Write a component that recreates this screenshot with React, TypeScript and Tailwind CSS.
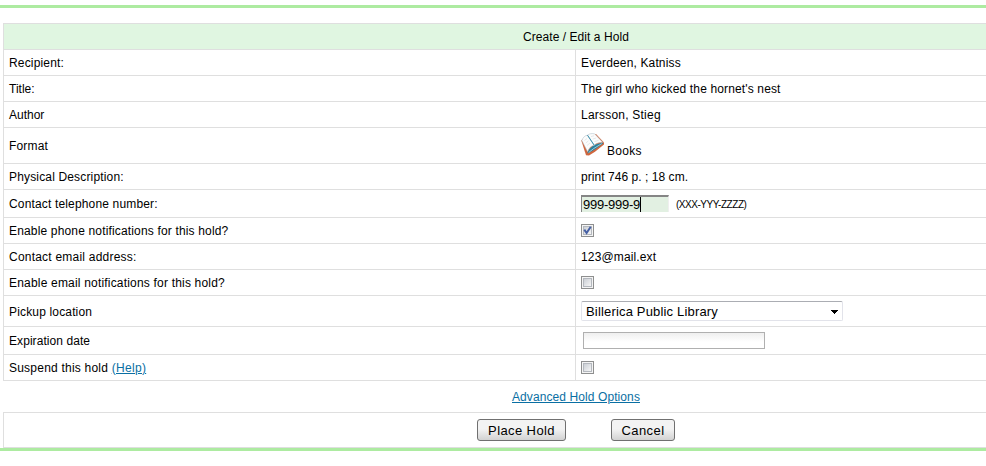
import type { ReactNode } from "react";

function Row({ label, height, children }: { label: ReactNode; height: string; children: ReactNode }) {
  return (
    <div className={`flex border-t border-[#dfdfdf] ${height}`}>
      <div className="flex w-[572px] shrink-0 items-center border-r border-[#dfdfdf] pl-[5px] tracking-[0.16px]">{label}</div>
      <div className="flex grow items-center pl-[5px] tracking-[0.14px]">{children}</div>
    </div>
  );
}

function Check({ checked = false }: { checked?: boolean }) {
  return (
    <span role="checkbox" aria-checked={checked} className="block size-[13px] border border-[#8e8f8f] bg-[#f4f4f4] p-px">
      <span className="block size-[9px] border border-[#b4b8be] bg-linear-to-br from-[#cbcfd5] to-[#f6f6f6]">
        {checked && (
          <svg viewBox="0 0 9 9" className="-ml-px -mt-px size-[9px]" fill="none">
            <path d="M1.3 3.6 L3.6 7 L7.7 0.8" stroke="#4660a4" strokeWidth="2" />
          </svg>
        )}
      </span>
    </span>
  );
}

function BookIcon() {
  return (
    <svg viewBox="0 0 24 24" className="-mt-px h-6 w-6 shrink-0" fill="none">
      <path d="M0.3 7.5 L5 22.3 L8 22.6 L14 18.8 L23 11.6 L23 9.5 L15 1 L6 2.5 Z" fill="#d0673f" />
      <path d="M6.2 20.5 L8 16.5 L13 12 L21.8 9.6 L22 10.6 L14.5 16 L9.5 19 Z" fill="#2583a2" />
      <path d="M7.6 19.6 L12.5 15.7 L20.8 10.6" stroke="#d5e6eb" strokeWidth=".7" />
      <path d="M0.8 7.4 C2 4.5 4 2.4 6.5 2.2 L13.2 12.2 C10 12.8 8 15 6.6 18.8 Z" fill="#fbfcfc" stroke="#a9bac4" strokeWidth=".5" />
      <path d="M6.5 2.2 C8.5 .5 11 .2 13.8 .9 L21.8 9.4 C18.5 9.2 15.5 10.2 13.2 12.2 Z" fill="#fbfcfc" stroke="#a9bac4" strokeWidth=".5" />
      <path d="M6.5 2.2 L13.2 12.2" stroke="#3b94b3" strokeWidth="1" />
      <path d="M3.5 7.5 L6 5.5 M4.8 10 L7.5 7.8 M6 12.5 L9 10 M10 3.5 L13 2.8 M11.8 6 L15.2 5 M13.5 8.6 L17.5 7.4" stroke="#d3dade" strokeWidth=".6" />
    </svg>
  );
}

export default function App() {
  return (
    <div className="h-[466px] overflow-hidden bg-white pt-[5px] font-['Liberation_Sans',Arial,sans-serif] text-[12px] leading-[14px] whitespace-nowrap text-black">
      <div className="h-[3px] bg-[#adeba1]" />
      <div className="mt-[15px] ml-[3px] border-l border-[#dfdfdf]">
        <div className="flex h-[26px] items-center border-t border-[#dfdfdf] bg-[#e0f6e1] pl-[519px]">
          <span className="tracking-[0.06px]">Create / Edit a Hold</span>
        </div>
        <Row height="h-[26px]" label={<span>Recipient:</span>}><span>Everdeen, Katniss</span></Row>
        <Row height="h-[26px]" label={<span className="tracking-normal">Title:</span>}><span>The girl who kicked the hornet's nest</span></Row>
        <Row height="h-[26px]" label={<span className="tracking-normal">Author</span>}><span className="tracking-[0.22px]">Larsson, Stieg</span></Row>
        <Row height="h-[36px]" label={<span>Format</span>}>
          <BookIcon />
          <span className="mt-[10px] ml-[2px] tracking-[0.3px]">Books</span>
        </Row>
        <Row height="h-[26px]" label={<span>Physical Description:</span>}><span className="tracking-[0.05px]">print 746 p. ; 18 cm.</span></Row>
        <Row height="h-[28px]" label={<span>Contact telephone number:</span>}>
          <span className="-mt-px flex h-[17px] w-[88px] items-center border-t-2 border-l border-r border-t-[#858585] border-r-[#efefef] border-l-[#858585] bg-[#e2f0e2] pl-px text-[13px] tracking-[-0.25px]">
            <span className="mt-[2px]">999-999-9</span>
            <span className="h-[15px] w-px bg-black" />
          </span>
          <span className="mt-[3px] ml-[7px] text-[10px] tracking-[-0.46px]">(XXX-YYY-ZZZZ)</span>
        </Row>
        <Row height="h-[26px]" label={<span>Enable phone notifications for this hold?</span>}><Check checked /></Row>
        <Row height="h-[26px]" label={<span className="tracking-[0.22px]">Contact email address:</span>}><span>123@mail.ext</span></Row>
        <Row height="h-[26px]" label={<span className="tracking-[0.19px]">Enable email notifications for this hold?</span>}><Check /></Row>
        <Row height="h-[31px]" label={<span className="mt-[2px]">Pickup location</span>}>
          <span className="flex h-5 w-[262px] items-center justify-between rounded-[2px] border border-[#e2e3ea] border-t-[#abadb3] pr-[4px] pl-[4px] text-[13px]">
            <span className="mt-[2px] tracking-[0.17px]">Billerica Public Library</span>
            <svg viewBox="0 0 7 4" className="mt-px h-[4px] w-[7px]" shapeRendering="crispEdges"><path d="M0 0H7L3.5 4Z" /></svg>
          </span>
        </Row>
        <Row height="h-[28px]" label={<span className="tracking-[0.07px]">Expiration date</span>}>
          <span className="ml-[2px] h-[17px] w-[182px] border border-[#b0b0b0] bg-linear-to-b from-[#efefef] to-white to-60%" />
        </Row>
        <Row height="h-[26px]" label={<span className="tracking-[0.22px]">Suspend this hold <a className="tracking-[0.3px] text-[#0a6fa3] underline">(Help)</a></span>}><Check /></Row>
      </div>
      <div className="ml-[3px] flex h-[32px] items-center border-t border-[#dfdfdf] pl-[509px]">
        <a className="tracking-[0.09px] text-[#0a6fa3] underline">Advanced Hold Options</a>
      </div>
      <div className="ml-[3px] flex h-[36px] items-center border-y border-l border-[#dfdfdf] pl-[473px] text-[13px]">
        <button className="h-[22px] w-[89px] rounded-[3px] border border-[#707070] bg-linear-to-b from-[#f3f3f3] from-45% to-[#d2d2d2] pt-px tracking-[0.4px]">Place Hold</button>
        <button className="ml-[45px] h-[22px] w-[64px] rounded-[3px] border border-[#707070] bg-linear-to-b from-[#f3f3f3] from-45% to-[#d2d2d2] pt-px tracking-[0.4px]">Cancel</button>
      </div>
      <div className="h-[3px] bg-[#adeba1]" />
    </div>
  );
}
